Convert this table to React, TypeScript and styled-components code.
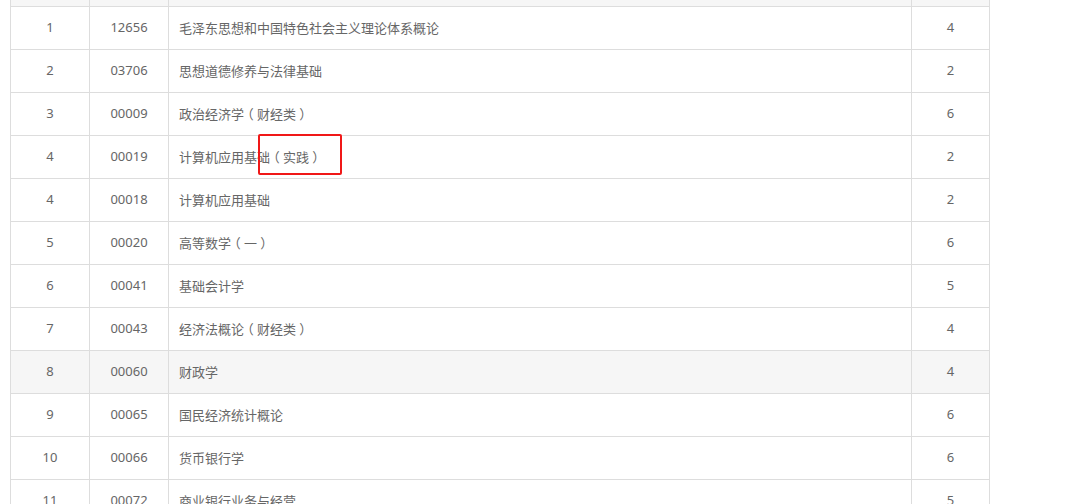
import React from "react";
import styled, { createGlobalStyle } from "styled-components";

const Global = createGlobalStyle`
  html, body { margin: 0; padding: 0; background: #fff; }
  body { font-family: "Microsoft YaHei", "Noto Sans", "Noto Sans CJK SC", sans-serif; }
`;

const Page = styled.div`
  padding-left: 10px;
  width: 980px;
`;

const Row = styled.div<{ $hl?: boolean; $head?: boolean }>`
  display: grid;
  grid-template-columns: 79px 79px 743px 78px;
  height: ${(p) => (p.$head ? "7px" : "43px")};
  border-left: 1px solid #dddddd;
  border-bottom: 1px solid #dddddd;
  box-sizing: border-box;
  background: ${(p) => (p.$hl || p.$head ? "#f6f6f6" : "#fff")};
`;

const Cell = styled.div<{ $left?: boolean }>`
  position: relative;
  box-sizing: border-box;
  border-right: 1px solid #dddddd;
  display: flex;
  align-items: center;
  justify-content: ${(p) => (p.$left ? "flex-start" : "center")};
  padding-left: ${(p) => (p.$left ? "10px" : "0")};
  padding-bottom: 2px;
  font-size: 13px;
  color: #666666;
  white-space: nowrap;
  overflow: visible;
`;

const Paren = styled.span`
  display: inline-block;
  width: 13px;
  text-align: center;
  font-family: "Noto Sans CJK SC", sans-serif;
  font-feature-settings: "halt";
`;

const Mark = styled.div`
  position: absolute;
  left: 89px;
  top: -2px;
  width: 84px;
  height: 41px;
  box-sizing: border-box;
  border: 2px solid #f01818;
  border-radius: 2px;
  pointer-events: none;
`;

const rows: [string, string, string, string][] = [
  ["1", "12656", "毛泽东思想和中国特色社会主义理论体系概论", "4"],
  ["2", "03706", "思想道德修养与法律基础", "2"],
  ["3", "00009", "政治经济学（财经类）", "6"],
  ["4", "00019", "计算机应用基础（实践）", "2"],
  ["4", "00018", "计算机应用基础", "2"],
  ["5", "00020", "高等数学（一）", "6"],
  ["6", "00041", "基础会计学", "5"],
  ["7", "00043", "经济法概论（财经类）", "4"],
  ["8", "00060", "财政学", "4"],
  ["9", "00065", "国民经济统计概论", "6"],
  ["10", "00066", "货币银行学", "6"],
  ["11", "00072", "商业银行业务与经营", "5"],
];

function Name({ text }: { text: string }) {
  const parts = text.split(/([（）])/).filter((s) => s !== "");
  return (
    <>
      {parts.map((p, i) =>
        p === "（" || p === "）" ? <Paren key={i}>{p}</Paren> : <span key={i}>{p}</span>
      )}
    </>
  );
}

export default function App() {
  return (
    <>
      <Global />
      <Page>
        <Row $head>
          <Cell />
          <Cell />
          <Cell />
          <Cell />
        </Row>
        {rows.map((r, i) => (
          <Row key={i} $hl={i === 8}>
            <Cell>{r[0]}</Cell>
            <Cell>{r[1]}</Cell>
            <Cell $left>
              <Name text={r[2]} />
              {i === 3 && <Mark />}
            </Cell>
            <Cell>{r[3]}</Cell>
          </Row>
        ))}
      </Page>
    </>
  );
}
